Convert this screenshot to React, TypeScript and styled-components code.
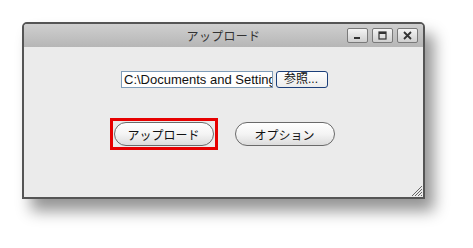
import styled, { createGlobalStyle } from "styled-components"

const GlobalStyle = createGlobalStyle`
  html, body {
    margin: 0;
    padding: 0;
    background: #ffffff;
  }
  body {
    font-family: "Liberation Sans", "Noto Sans CJK JP", sans-serif;
  }
`

const Page = styled.div`
  width: 473px;
  height: 248px;
  padding: 22px 0 0 22px;
  box-sizing: border-box;
`

const Window = styled.div`
  width: 403px;
  height: 177px;
  box-sizing: border-box;
  border: 2px solid #555;
  border-radius: 5px 5px 0 0;
  background: #ebebeb;
  box-shadow: 9px 12px 15px rgba(0, 0, 0, 0.42);
  display: flex;
  flex-direction: column;
  position: relative;
`

const TitleBar = styled.div`
  height: 23px;
  flex-shrink: 0;
  background: linear-gradient(#cfcfcf, #b6b6b6);
  border-radius: 3px 3px 0 0;
  display: grid;
  grid-template-columns: 1fr auto 1fr;
  align-items: center;
`

const Title = styled.div`
  grid-column: 2;
  font-size: 12px;
  color: #333;
  letter-spacing: 0.3px;
`

const Controls = styled.div`
  grid-column: 3;
  justify-self: end;
  display: flex;
  gap: 4px;
  padding-right: 5px;
`

const CtlButton = styled.div`
  width: 19px;
  height: 13px;
  border: 1px solid #7a7a7a;
  border-radius: 2px;
  background: linear-gradient(#f4f4f4, #cfcfcf);
  display: flex;
  align-items: center;
  justify-content: center;
`

const Body = styled.div`
  flex: 1;
  display: flex;
  flex-direction: column;
  align-items: center;
  padding-top: 24px;
  gap: 30px;
`

const FileRow = styled.div`
  display: flex;
  align-items: center;
  gap: 3px;
  margin-left: 2px;
`

const PathInput = styled.div`
  width: 152px;
  height: 17px;
  box-sizing: border-box;
  border: 1px solid #7f9db9;
  background: #fff;
  font-size: 13px;
  line-height: 15px;
  padding-left: 2px;
  overflow: hidden;
  white-space: nowrap;
  color: #111;
`

const BrowseButton = styled.div`
  width: 52px;
  height: 17px;
  box-sizing: border-box;
  border: 1px solid #1c3f7a;
  border-radius: 3px;
  background: linear-gradient(#ffffff, #ececec);
  font-size: 12px;
  line-height: 15px;
  padding-left: 7px;
  color: #111;
`

const ButtonRow = styled.div`
  display: flex;
  align-items: center;
  gap: 13px;
  margin-left: 1px;
`

const Focus = styled.div<{ $active?: boolean }>`
  padding: 1px;
  border: 3px solid ${(p) => (p.$active ? "#e60000" : "transparent")};
`

const PillButton = styled.div`
  width: 100px;
  height: 24px;
  box-sizing: border-box;
  border: 1px solid #6a6a6a;
  border-radius: 12px;
  background: linear-gradient(#ffffff 0%, #f4f4f4 50%, #dcdcdc 100%);
  font-size: 12px;
  display: flex;
  align-items: center;
  justify-content: center;
  color: #111;
`

const Grip = styled.svg`
  position: absolute;
  right: 0;
  bottom: 0;
`

export default function App() {
  return (
    <Page>
      <GlobalStyle />
      <Window>
        <TitleBar>
          <Title>アップロード</Title>
          <Controls>
            <CtlButton>
              <svg width="9" height="9" viewBox="0 0 9 9">
                <rect x="1" y="6" width="6" height="2" fill="#333" />
              </svg>
            </CtlButton>
            <CtlButton>
              <svg width="9" height="9" viewBox="0 0 9 9">
                <rect x="1" y="1" width="7" height="7" fill="none" stroke="#333" strokeWidth="1.2" />
                <rect x="1" y="1" width="7" height="2" fill="#333" />
              </svg>
            </CtlButton>
            <CtlButton>
              <svg width="9" height="9" viewBox="0 0 9 9">
                <path d="M1 1 L8 8 M8 1 L1 8" stroke="#333" strokeWidth="1.8" />
              </svg>
            </CtlButton>
          </Controls>
        </TitleBar>
        <Body>
          <FileRow>
            <PathInput>C:\Documents and Setting</PathInput>
            <BrowseButton>参照...</BrowseButton>
          </FileRow>
          <ButtonRow>
            <Focus $active>
              <PillButton>アップロード</PillButton>
            </Focus>
            <Focus>
              <PillButton>オプション</PillButton>
            </Focus>
          </ButtonRow>
        </Body>
        <Grip width="11" height="11" viewBox="0 0 11 11">
          <path d="M10 3 L3 10 M10 6 L6 10 M10 9 L9 10 M10 0 L0 10" stroke="#666" strokeWidth="1" />
        </Grip>
      </Window>
    </Page>
  )
}
